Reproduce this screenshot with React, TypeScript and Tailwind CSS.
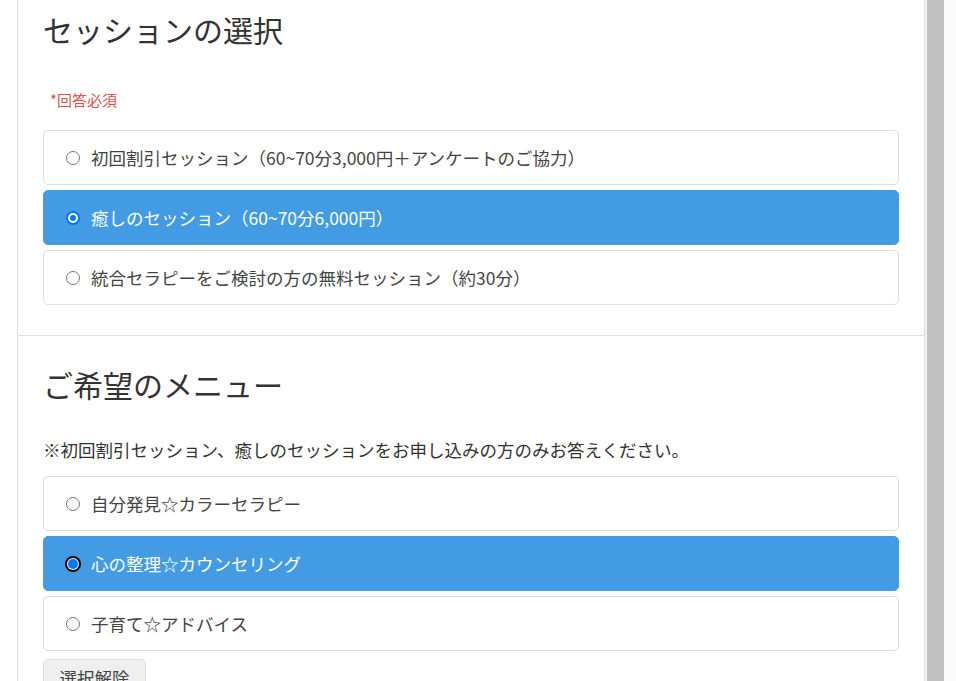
const sessions = [
  '初回割引セッション（60~70分3,000円＋アンケートのご協力）',
  '癒しのセッション（60~70分6,000円）',
  '統合セラピーをご検討の方の無料セッション（約30分）',
]

const menus = ['自分発見☆カラーセラピー', '心の整理☆カウンセリング', '子育て☆アドバイス']

function Radio({ checked, focused }: { checked: boolean; focused?: boolean }) {
  if (!checked) {
    return <span className="w-[14px] h-[14px] shrink-0 rounded-full border border-[#767676] bg-white" />
  }
  if (focused) {
    return (
      <span className="w-[16px] h-[16px] -mx-[1px] shrink-0 rounded-full bg-black p-[2px] flex">
        <span className="flex-1 rounded-full bg-white p-[1px] flex">
          <span className="flex-1 rounded-full bg-[#0075ff]" />
        </span>
      </span>
    )
  }
  return (
    <span className="w-[14px] h-[14px] shrink-0 rounded-full border-2 border-[#0075ff] bg-white flex items-center justify-center">
      <span className="w-[6px] h-[6px] rounded-full bg-[#0075ff]" />
    </span>
  )
}

function Option({ label, selected, focused }: { label: string; selected: boolean; focused?: boolean }) {
  return (
    <label
      className={
        selected
          ? 'h-[55px] flex items-center gap-[11px] pl-[22px] rounded-[5px] border border-[#439ce3] bg-[#439ce3] text-white'
          : 'h-[55px] flex items-center gap-[11px] pl-[22px] rounded-[5px] border border-[#dcdcdc] bg-white text-[#444]'
      }
    >
      <Radio checked={selected} focused={focused} />
      <span className="text-[17.5px] leading-none">{label}</span>
    </label>
  )
}

export default function App() {
  return (
    <div
      className="h-[681px] overflow-hidden flex bg-white"
      style={{ fontFamily: '"Noto Sans CJK JP", "Noto Sans", sans-serif' }}
    >
      <div className="w-[17px] shrink-0" />
      <main className="w-[908px] shrink-0 border-x border-[#dedede] bg-white">
        <section className="pt-[8px] pb-[30px] pl-[25px] pr-[25px] border-b border-[#dedede]">
          <h2 className="text-[30px] leading-[42px] text-[#333]">セッションの選択</h2>
          <p className="mt-[40px] pl-[7px] text-[15px] leading-[20px] text-[#d9534f]">*回答必須</p>
          <div className="mt-[20px] flex flex-col gap-[5px]">
            {sessions.map((s, i) => (
              <Option key={s} label={s} selected={i === 1} />
            ))}
          </div>
        </section>
        <section className="pt-[27px] pl-[25px] pr-[25px]">
          <h2 className="text-[30px] leading-[42px] text-[#333]">ご希望のメニュー</h2>
          <p className="mt-[32px] text-[17.5px] leading-[26px] text-[#333]">
            ※初回割引セッション、癒しのセッションをお申し込みの方のみお答えください。
          </p>
          <div className="mt-[13px] flex flex-col gap-[5px]">
            {menus.map((m, i) => (
              <Option key={m} label={m} selected={i === 1} focused={i === 1} />
            ))}
          </div>
          <button className="mt-[8px] h-[38px] w-[103px] rounded-[5px] border border-[#dcdcdc] bg-[#efefef] text-[17.5px] text-[#444]">
            選択解除
          </button>
        </section>
      </main>
      <div className="w-[2px] shrink-0 bg-[#f1f1f1]" />
      <div className="w-[17px] shrink-0 bg-[#c1c1c1]" />
      <div className="flex-1 bg-[#fafafa]" />
    </div>
  )
}
